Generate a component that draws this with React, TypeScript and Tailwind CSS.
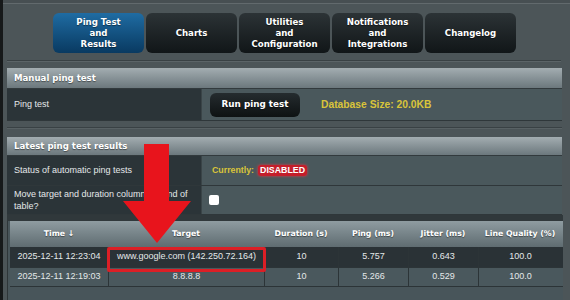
import React from 'react';

const tabs = [
  { lines: ['Ping Test', 'and', 'Results'], active: true },
  { lines: ['Charts'], active: false },
  { lines: ['Utilities', 'and', 'Configuration'], active: false },
  { lines: ['Notifications', 'and', 'Integrations'], active: false },
  { lines: ['Changelog'], active: false },
];

const results = [
  { time: '2025-12-11 12:23:04', target: 'www.google.com (142.250.72.164)', duration: '10', ping: '5.757', jitter: '0.643', quality: '100.0' },
  { time: '2025-12-11 12:19:03', target: '8.8.8.8', duration: '10', ping: '5.266', jitter: '0.529', quality: '100.0' },
];

const heading = "font-['DejaVu_Sans',sans-serif] font-bold text-white [text-shadow:0_1px_1px_rgba(0,0,0,0.45)]";
const body = "font-['Liberation_Sans',Arial,sans-serif] text-[9px] text-[#e4e8e9]";
const cols = 'grid grid-cols-[98px_156px_74px_70px_70px_84px]';

const SectionHeader: React.FC<{ title: string; h: string }> = ({ title, h }) => (
  <div className={`${h} flex items-center pl-[7px] bg-linear-to-b from-[#a3adb1] to-[#6c787d] border-b border-[#323a3d] text-[8.6px] ${heading}`}>
    {title}
  </div>
);

const App: React.FC = () => {
  return (
    <div className="relative w-[570px] h-[300px] overflow-hidden bg-[#4c5558] border-l-[3px] border-[#16191a]">
      {/* top edge */}
      <div className="h-[3px] bg-[#474f52]" />
      <div className="h-px bg-[#626a6d]" />

      {/* Tabs */}
      <div className="mt-[9px] pl-[50px] flex gap-[2px]">
        {tabs.map((t) => (
          <div
            key={t.lines[0]}
            className={`w-[91px] h-[40px] rounded-[6px] flex flex-col items-center justify-center text-center text-[8.6px] leading-[11px] ${heading} ${
              t.active
                ? 'bg-linear-to-b from-[#1f6ca3] to-[#093a61]'
                : 'bg-linear-to-b from-[#2c3336] to-[#111618]'
            }`}
          >
            {t.lines.map((l) => (
              <span key={l}>{l}</span>
            ))}
          </div>
        ))}
      </div>

      {/* separator */}
      <div className="mt-[7px] ml-[4px] w-[554px] h-px bg-[#394144]" />
      <div className="ml-[4px] w-[554px] h-px bg-[#5b6467]" />

      <div className="ml-[4px] w-[555px]">
        {/* Manual ping test */}
        <div className="mt-[6px]">
          <SectionHeader title="Manual ping test" h="h-[21px]" />
          <div className="flex h-[32px] border-b border-[#2f373a]">
            <div className={`w-[194px] bg-[#2b3438] flex items-center pl-[7px] ${body}`}>Ping test</div>
            <div className="flex-1 bg-[#4a585c] flex items-center pl-[8px] border-l border-[#3a4447]">
              <div className={`w-[90px] h-[24px] rounded-[6px] bg-linear-to-b from-[#252c2f] to-[#0e1213] flex items-center justify-center text-[8.8px] ${heading}`}>
                Run ping test
              </div>
              <span className="ml-[21px] font-['Liberation_Sans',Arial,sans-serif] font-bold text-[10.3px] text-[#d9c43a]">
                Database Size: 20.0KB
              </span>
            </div>
          </div>
        </div>

        {/* gap line */}
        <div className="mt-[6px] h-px bg-[#394144]" />
        <div className="h-px bg-[#586164]" />

        {/* Latest ping test results */}
        <div className="mt-[8px]">
          <SectionHeader title="Latest ping test results" h="h-[19px]" />
          <div className="flex h-[30px] border-b border-[#2f373a]">
            <div className={`w-[194px] bg-[#2b3438] flex items-center pl-[7px] ${body}`}>Status of automatic ping tests</div>
            <div className="flex-1 bg-[#4a585c] flex items-center pl-[10px] border-l border-[#3a4447] font-['Liberation_Sans',Arial,sans-serif] font-bold text-[8.8px]">
              <span className="text-[#d9c43a]">Currently:</span>
              <span className="ml-[4px] px-[2px] leading-[11px] rounded-[3px] bg-[#c41e2b] text-white shadow-[0_0_3px_#e23a45]">DISABLED</span>
            </div>
          </div>
          <div className="flex h-[29px] border-b border-[#2f373a]">
            <div className={`w-[194px] bg-[#2b3438] flex items-center pl-[7px] pr-[8px] leading-[12px] ${body}`}>
              Move target and duration columns to end of table?
            </div>
            <div className="flex-1 bg-[#4a585c] flex items-center pl-[7px] border-l border-[#3a4447]">
              <div className="w-[10px] h-[10px] rounded-[2px] bg-white" />
            </div>
          </div>
        </div>
      </div>

      {/* Results table */}
      <div className="ml-[4px] w-[556px] h-[6px] bg-[#30383b]" />
      <div className="ml-[4px] w-[556px] pl-[2px] bg-[#48555a] border-l border-[#2e3639] h-[90px]">
        <div className={`${cols} h-[26px] bg-linear-to-b from-[#8f9ca1] to-[#5f6c71] text-[7.8px] ${heading}`}>
          {['Time ↓', 'Target', 'Duration (s)', 'Ping (ms)', 'Jitter (ms)', 'Line Quality (%)'].map((h) => (
            <div key={h} className="flex items-center justify-center">{h}</div>
          ))}
        </div>
        {results.map((r, i) => (
          <div
            key={r.time}
            className={`${cols} ${i === 0 ? 'h-[21px] bg-[#2a3236]' : 'h-[19px] bg-[#4a585d]'} border-b border-[#2c3437] ${body}`}
          >
            {[r.time, r.target, r.duration, r.ping, r.jitter, r.quality].map((v, j) => (
              <div key={j} className={`flex items-center justify-center ${j > 0 ? 'border-l border-[#2c3437]' : ''}`}>
                {v}
              </div>
            ))}
          </div>
        ))}
      </div>

      {/* annotation: highlight box */}
      <div className="absolute left-[104px] top-[247px] w-[159px] h-[25px] border-[3px] border-[#dc1f26] rounded-[2px]" />

      {/* annotation: arrow */}
      <svg className="absolute left-[-3px] top-0" width="570" height="300" viewBox="0 0 570 300">
        <polygon points="144,144 169,144 169,201 191,201 157,243 123,201 144,201" fill="#e8141c" />
      </svg>
    </div>
  );
};

export default App;
